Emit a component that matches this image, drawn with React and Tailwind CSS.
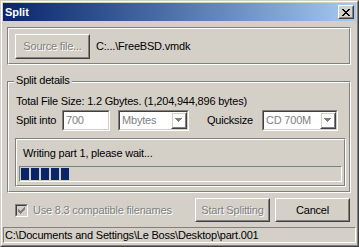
const disabledText = 'text-[#808080] [text-shadow:1px_1px_0_#ffffff]'

function Raised({ className = '', children }) {
  return (
    <div className={`border border-t-white border-l-white border-r-[#404040] border-b-[#404040] ${className}`}>
      <div className="h-full w-full border border-t-[#d4d0c8] border-l-[#d4d0c8] border-r-[#808080] border-b-[#808080] flex items-center justify-center">
        {children}
      </div>
    </div>
  )
}

function Sunken({ className = '', innerCls = 'bg-white', children }) {
  return (
    <div className={`border border-t-[#808080] border-l-[#808080] border-r-white border-b-white ${className}`}>
      <div className={`h-full w-full border border-t-[#404040] border-l-[#404040] border-r-[#d4d0c8] border-b-[#d4d0c8] flex items-center ${innerCls}`}>
        {children}
      </div>
    </div>
  )
}

function Etched({ className = '', innerCls = '', caption, children }) {
  return (
    <div className={`relative border border-t-[#808080] border-l-[#808080] border-r-white border-b-white ${className}`}>
      <div className={`h-full w-full border border-t-white border-l-white border-r-[#808080] border-b-[#808080] ${innerCls}`}>
        {children}
      </div>
      {caption && (
        <span className="absolute left-[6px] -top-[8px] px-[2px] bg-[#d4d0c8] leading-[13px] text-black">
          {caption}
        </span>
      )}
    </div>
  )
}

function ArrowDown() {
  return (
    <svg width="8" height="5" viewBox="0 0 8 5" shapeRendering="crispEdges">
      <g fill="#ffffff" transform="translate(1,1)">
        <rect x="0" y="0" width="7" height="1" />
        <rect x="1" y="1" width="5" height="1" />
        <rect x="2" y="2" width="3" height="1" />
        <rect x="3" y="3" width="1" height="1" />
      </g>
      <g fill="#808080">
        <rect x="0" y="0" width="7" height="1" />
        <rect x="1" y="1" width="5" height="1" />
        <rect x="2" y="2" width="3" height="1" />
        <rect x="3" y="3" width="1" height="1" />
      </g>
    </svg>
  )
}

function Combo({ width, value }) {
  return (
    <Sunken className={`${width} h-[21px]`}>
      <span className="flex-1 pl-[2px] text-[#808080] leading-[13px]">{value}</span>
      <Raised className="w-[16px] h-[17px]">
        <ArrowDown />
      </Raised>
    </Sunken>
  )
}

function CloseGlyph() {
  return (
    <svg width="8" height="7" viewBox="0 0 8 7" shapeRendering="crispEdges" fill="#000">
      <rect x="0" y="0" width="2" height="1" />
      <rect x="6" y="0" width="2" height="1" />
      <rect x="1" y="1" width="2" height="1" />
      <rect x="5" y="1" width="2" height="1" />
      <rect x="2" y="2" width="4" height="1" />
      <rect x="3" y="3" width="2" height="1" />
      <rect x="2" y="4" width="4" height="1" />
      <rect x="1" y="5" width="2" height="1" />
      <rect x="5" y="5" width="2" height="1" />
      <rect x="0" y="6" width="2" height="1" />
      <rect x="6" y="6" width="2" height="1" />
    </svg>
  )
}

function CheckGlyph() {
  return (
    <svg width="7" height="7" viewBox="0 0 7 7" shapeRendering="crispEdges" fill="#808080">
      <rect x="0" y="2" width="1" height="3" />
      <rect x="1" y="3" width="1" height="3" />
      <rect x="2" y="4" width="1" height="3" />
      <rect x="3" y="3" width="1" height="3" />
      <rect x="4" y="2" width="1" height="3" />
      <rect x="5" y="1" width="1" height="3" />
      <rect x="6" y="0" width="1" height="3" />
    </svg>
  )
}

export default function App() {
  return (
    <div className="w-[359px] h-[247px] font-['Liberation_Sans',Arial,sans-serif] text-[11px] tracking-[-0.2px] text-black border border-t-[#d4d0c8] border-l-[#d4d0c8] border-r-[#404040] border-b-[#404040] bg-[#d4d0c8]">
      <div className="h-full w-full border border-t-white border-l-white border-r-[#808080] border-b-[#808080] p-[1px] flex flex-col">
        {/* Title bar */}
        <div className="h-[18px] flex items-center justify-between bg-gradient-to-r from-[#0a246a] to-[#a6caf0] pl-[2px] pr-[2px]">
          <span className="text-white font-bold leading-[13px] tracking-normal">Split</span>
          <Raised className="w-[16px] h-[14px] bg-[#d4d0c8]">
            <CloseGlyph />
          </Raised>
        </div>

        {/* Body */}
        <div className="flex-1 flex flex-col">
          <Etched className="mt-[6px] ml-[4px] w-[344px] h-[38px]" innerCls="flex items-center pl-[6px]">
            <Raised className="w-[75px] h-[25px]">
              <span className={disabledText}>Source file...</span>
            </Raised>
            <span className="ml-[6px] leading-[13px]">C:...\FreeBSD.vmdk</span>
          </Etched>

          <Etched caption="Split details" className="mt-[16px] ml-[4px] w-[344px] h-[112px]" innerCls="flex flex-col pl-[6px]">
            <div className="mt-[12px] leading-[13px] pl-[1px]">Total File Size: 1.2 Gbytes. (1,204,944,896 bytes)</div>
            <div className="mt-[2px] flex items-center h-[21px]">
              <span className="w-[47px] pl-[1px] leading-[13px]">Split into</span>
              <Sunken className="w-[48px] h-[21px]">
                <span className="pl-[2px] text-[#808080] leading-[13px]">700</span>
              </Sunken>
              <div className="ml-[8px]">
                <Combo width="w-[71px]" value="Mbytes" />
              </div>
              <span className="ml-[18px] w-[55px] leading-[13px]">Quicksize</span>
              <Combo width="w-[76px]" value="CD 700M" />
            </div>
            <Etched className="mt-[7px] w-[331px] h-[49px]" innerCls="flex flex-col px-[2px]">
              <div className="mt-[7px] pl-[4px] leading-[13px]">Writing part 1, please wait...</div>
              <div className="mt-[6px] h-[16px] border border-t-[#808080] border-l-[#808080] border-r-white border-b-white p-[1px] flex gap-[2px]">
                {[0, 1, 2, 3, 4].map(i => (
                  <div key={i} className="w-[8px] h-[12px] bg-[#0a246a]" />
                ))}
              </div>
            </Etched>
          </Etched>

          <div className="mt-[5px] h-[24px] flex items-center">
            <Sunken className="ml-[12px] w-[13px] h-[13px]" innerCls="bg-[#d4d0c8] justify-center">
              <CheckGlyph />
            </Sunken>
            <span className={`ml-[5px] leading-[13px] ${disabledText}`}>Use 8.3 compatible filenames</span>
            <div className="ml-auto mr-[6px] flex gap-[5px]">
              <Raised className="w-[75px] h-[24px]">
                <span className={disabledText}>Start Splitting</span>
              </Raised>
              <Raised className="w-[75px] h-[24px]">
                <span>Cancel</span>
              </Raised>
            </div>
          </div>

          <div className="mt-[5px] h-[16px] border border-t-[#808080] border-l-[#808080] border-r-white border-b-white flex items-center pl-[1px]">
            <span className="leading-[13px]">C:\Documents and Settings\Le Boss\Desktop\part.001</span>
          </div>
        </div>
      </div>
    </div>
  )
}
